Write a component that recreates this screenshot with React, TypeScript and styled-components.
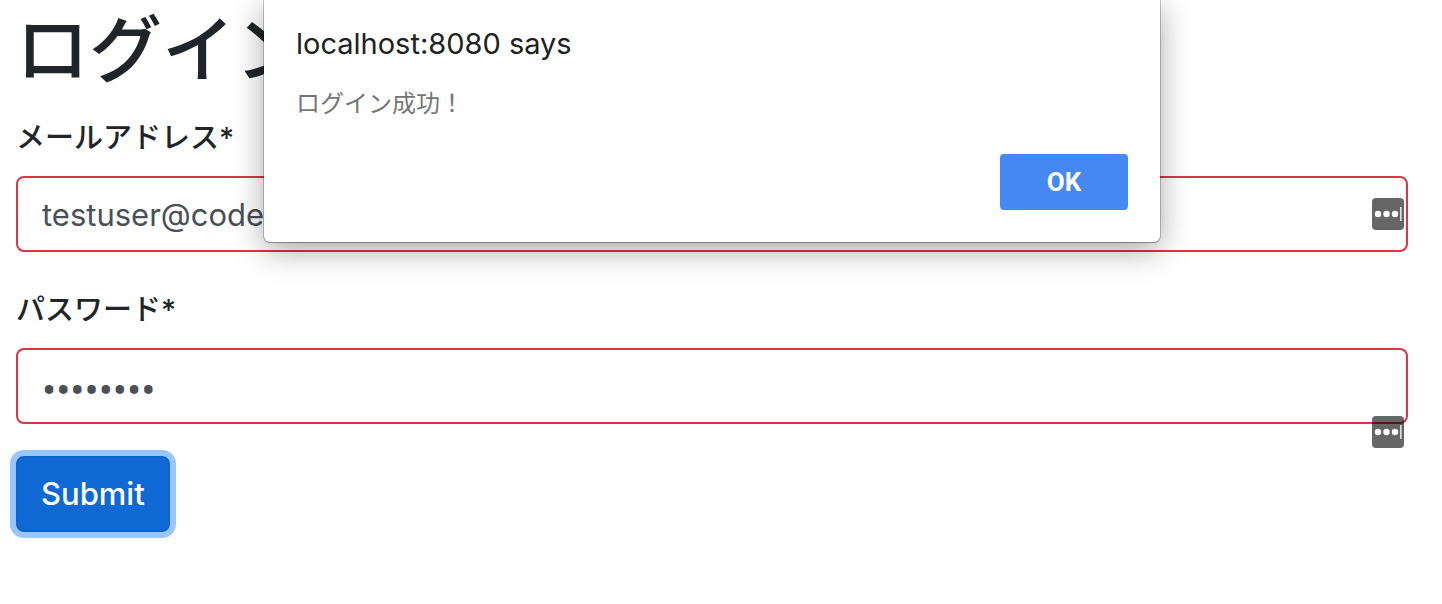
import React, { useState } from "react";
import styled, { createGlobalStyle } from "styled-components";

const GlobalStyle = createGlobalStyle`
  *, *::before, *::after { box-sizing: border-box; }
  body {
    margin: 0;
    background: #fff;
    color: #212529;
    font-family: Inter, "Noto Sans CJK JP", sans-serif;
    font-size: 32px;
    line-height: 48px;
  }
`;

const Page = styled.main`
  position: relative;
  padding: 0 34px 72px 16px;
`;

const Title = styled.h1`
  margin: 0 0 12px;
  font-size: 73px;
  font-weight: 500;
  line-height: 100px;
`;

const Form = styled.form`
  display: flex;
  flex-direction: column;
  align-items: flex-start;
  gap: 32px;
`;

const Field = styled.div`
  display: flex;
  flex-direction: column;
  gap: 12px;
  width: 100%;
`;

const Label = styled.label`
  font-size: 29px;
  line-height: 52px;
  font-weight: 500;
`;

const Control = styled.div`
  position: relative;
`;

const Input = styled.input`
  display: block;
  width: 100%;
  height: 76px;
  padding: 12px 24px;
  border: 2px solid #dc3545;
  border-radius: 8px;
  background: #fff;
  color: #495057;
  font-family: Inter, sans-serif;
  font-size: 31px;
  line-height: 48px;
  outline: none;

  &[type="password"] {
    padding: 16px 24px 8px;
    font-family: Roboto, sans-serif;
    font-size: 42px;
  }
`;

const ManagerBadge = styled.svg<{ $below?: boolean }>`
  position: absolute;
  right: 4px;
  top: ${(p) => (p.$below ? "68px" : "22px")};
  width: 32px;
  height: 32px;
`;

const SubmitButton = styled.button`
  height: 76px;
  padding: 12px 23px;
  border: 2px solid #0c65ce;
  border-radius: 8px;
  background: #0f69d4;
  box-shadow: 0 0 0 6px #99c6ff;
  color: #fff;
  font-family: Inter, sans-serif;
  font-size: 31px;
  font-weight: 500;
  line-height: 48px;
`;

const Overlay = styled.div`
  position: absolute;
  inset: 0 34px auto 16px;
  display: flex;
  justify-content: center;
`;

const Dialog = styled.section`
  display: flex;
  flex-direction: column;
  width: 100%;
  max-width: 896px;
  padding: 20px 32px 32px;
  border-radius: 0 0 6px 6px;
  background: #fff;
  box-shadow: 0 0 0 1px rgba(0, 0, 0, 0.2), 0 1px 1px rgba(0, 0, 0, 0.2), 0 8px 32px rgba(0, 0, 0, 0.35);
`;

const DialogTitle = styled.h2`
  margin: 0 0 18px;
  color: #212121;
  font-size: 29px;
  font-weight: 400;
  line-height: 48px;
`;

const Message = styled.p`
  margin: 0 0 32px;
  color: #757575;
  font-size: 24px;
  line-height: 36px;
`;

const OkButton = styled.button`
  align-self: flex-end;
  width: 128px;
  height: 56px;
  border: 0;
  border-radius: 4px;
  background: #4688f1;
  color: #fff;
  font-family: Roboto, sans-serif;
  font-size: 26px;
  font-weight: 700;
`;

function PasswordManagerBadge({ below }: { below?: boolean }) {
  return (
    <ManagerBadge $below={below} viewBox="0 0 32 32" aria-hidden="true">
      <rect width="32" height="32" rx="4" fill="#000" fillOpacity="0.6" />
      <circle cx="6" cy="16" r="3.2" fill="#fff" />
      <circle cx="14.5" cy="16" r="3.2" fill="#fff" />
      <circle cx="23" cy="16" r="3.2" fill="#fff" />
      <rect x="28" y="9" width="1.6" height="14" fill="#fff" fillOpacity="0.8" />
    </ManagerBadge>
  );
}

export default function App() {
  const [email, setEmail] = useState("testuser@codecamp.jp");
  const [password, setPassword] = useState("password");
  const [open, setOpen] = useState(true);

  return (
    <Page>
      <GlobalStyle />
      <Title>ログイン</Title>
      <Form onSubmit={(e) => { e.preventDefault(); setOpen(true); }}>
        <Field>
          <Label htmlFor="email">メールアドレス*</Label>
          <Control>
            <Input id="email" type="email" value={email} onChange={(e) => setEmail(e.target.value)} />
            <PasswordManagerBadge />
          </Control>
        </Field>
        <Field>
          <Label htmlFor="password">パスワード*</Label>
          <Control>
            <Input id="password" type="password" value={password} onChange={(e) => setPassword(e.target.value)} />
            <PasswordManagerBadge below />
          </Control>
        </Field>
        <SubmitButton type="submit">Submit</SubmitButton>
      </Form>
      {open && (
        <Overlay>
          <Dialog role="alertdialog" aria-labelledby="dialog-title" aria-describedby="dialog-message">
            <DialogTitle id="dialog-title">localhost:8080 says</DialogTitle>
            <Message id="dialog-message">ログイン成功！</Message>
            <OkButton type="button" onClick={() => setOpen(false)}>OK</OkButton>
          </Dialog>
        </Overlay>
      )}
    </Page>
  );
}
